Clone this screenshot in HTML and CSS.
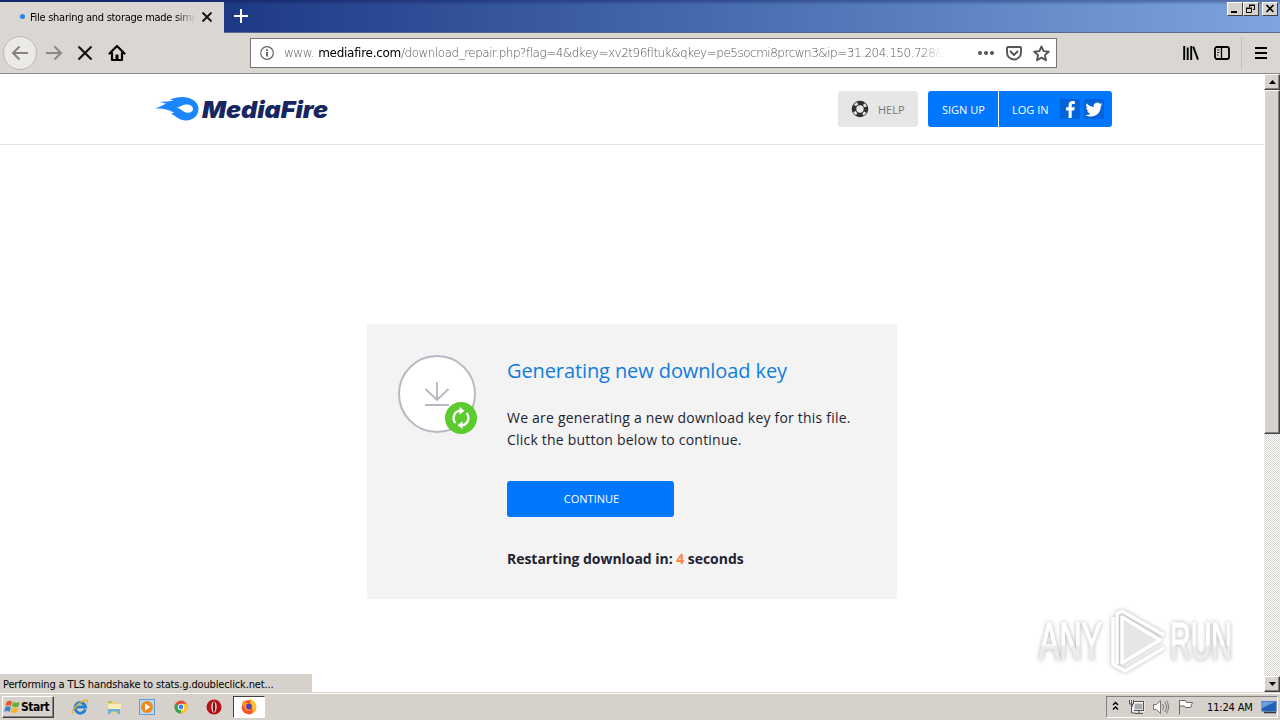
FILE: index.html
```html
<!DOCTYPE html>
<html lang="en">
<head>
    <meta charset="utf-8">
    <title>File sharing and storage made simple</title>
    <link rel="stylesheet" href="styles.css">
</head>
<body>
    <div class="titlebar">
        <div class="tab">
            <span class="dot"></span>
            <span class="tab-title">File sharing and storage made simple</span>
            <svg class="tab-close" width="12" height="12" viewBox="0 0 12 12"><path d="M1.500 1.500l9 9M10.500 1.500l-9 9" stroke="#111" stroke-width="1.800"/></svg>
        </div>
        <svg class="newtab" width="14" height="14" viewBox="0 0 14 14"><path d="M7 0v14M0 7h14" stroke="#fff" stroke-width="2"/></svg>
        <div class="winbtns">
            <span class="winbtn"><svg width="14" height="12"><path d="M3 9h6" stroke="#000" stroke-width="2"/></svg></span>
            <span class="winbtn"><svg width="14" height="12" fill="none" stroke="#000"><path d="M5.500 4V2.500h5v4H9M5 2h6M2.500 5.500h5v4h-5zM2 5h6"/></svg></span>
            <span class="winbtn close"><svg width="14" height="12"><path d="M3.500 2l7 7M10.500 2l-7 7" stroke="#000" stroke-width="1.600"/></svg></span>
        </div>
    </div>

    <div class="toolbar">
        <div class="nav">
            <span class="back"><svg width="18" height="16" viewBox="0 0 18 16" fill="none" stroke="#85837f" stroke-width="2"><path d="M17 8H2M8.500 1.500L2 8l6.500 6.500"/></svg></span>
            <svg class="forward" width="18" height="16" viewBox="0 0 18 16" fill="none" stroke="#8b8985" stroke-width="2"><path d="M1 8h15M9.500 1.500L16 8l-6.500 6.500"/></svg>
            <svg class="stop" width="16" height="16" viewBox="0 0 16 16"><path d="M1.500 1.500l13 13M14.500 1.500l-13 13" stroke="#111" stroke-width="2.200"/></svg>
            <svg class="home" width="18" height="18" viewBox="0 0 18 18"><path d="M1.500 9.500L9 2l7.500 7.500M4 9v7h10V9" fill="none" stroke="#000" stroke-width="2.200" stroke-linecap="round" stroke-linejoin="round"/><path d="M7.500 16v-5.500h3V16z"/></svg>
        </div>
        <div class="urlbar">
            <svg width="14" height="14" viewBox="0 0 14 14"><circle cx="7" cy="7" r="6.300" fill="none" stroke="#666" stroke-width="1.200"/><path d="M7 6v4.500M7 3.200v1.700" stroke="#555" stroke-width="1.800"/></svg>
            <span class="url">www.<b>mediafire.com</b>/download_repair.php?flag=4&amp;dkey=xv2t96fltuk&amp;qkey=pe5socmi8prcwn3&amp;ip=31.204.150.728&amp;</span>
            <svg class="dots" width="16" height="4" viewBox="0 0 16 4" fill="#555"><circle cx="2" cy="2" r="2"/><circle cx="8" cy="2" r="2"/><circle cx="14" cy="2" r="2"/></svg>
            <svg class="pocket" width="16" height="15" viewBox="0 0 16 15" fill="none" stroke="#555" stroke-width="1.900" stroke-linejoin="round" stroke-linecap="round"><path d="M2 1h12a1 1 0 0 1 1 1v4.500a7 7 0 0 1-14 0V2a1 1 0 0 1 1-1zM4.500 5.500L8 9l3.500-3.500"/></svg>
            <svg class="star" width="17" height="17" viewBox="0 0 17 17" fill="none" stroke="#555" stroke-width="1.900" stroke-linejoin="round"><path d="M8.500 1.400l2.100 4.700 5.200.6-3.900 3.400 1.100 5.200-4.500-2.700L4 15.300l1.100-5.200L1.200 6.700l5.200-.6z"/></svg>
        </div>
        <div class="tools">
            <svg class="library" width="16" height="14" viewBox="0 0 16 14" stroke="#000" stroke-width="1.900"><path d="M1.200 0v14M4.700 1.500V14M8.200 0v14M10.200 .7L15 13.600"/></svg>
            <svg class="sidebar" width="16" height="14" viewBox="0 0 16 14" fill="none" stroke="#000"><rect x="1" y="1" width="14" height="12" rx="2" stroke-width="1.800"/><path d="M7.500 1v12" stroke-width="1.300"/><path d="M3 4h2.500M3 6.500h2.500M3 9h1.500" stroke-width=".8"/></svg>
            <span class="sep"></span>
            <svg class="menu" width="12" height="12" viewBox="0 0 12 12"><path d="M0 1h12M0 6h12M0 11h12" stroke="#000" stroke-width="2"/></svg>
        </div>
    </div>

    <div class="view">
        <div class="page">
            <div class="header">
                <svg class="logo" width="176" height="30" viewBox="0 0 176 30">
                    <path d="M0 13.500C5 12 8 10 11 8.500L4.500 7C10 6.500 15 6.500 19 5.500 17 5 16 4.500 14.500 4.500 21 2 27 1.300 32 2.500 39 4 43.500 8.500 43.500 14c0 6.500-5.500 11.500-12.500 11.500-7 0-9.500-4.500-15-6.500 1-.7 2-1.200 3-1.300C13 14 7 13.500 0 13.500z" fill="#1b86ff"/>
                    <path d="M20.500 12.500c4 .5 5.500-2.500 10-3 4-.5 7.500 1.500 7.500 4.500s-3.500 4.500-7 3.500c-4-1-5.500-4.500-10.500-5z" fill="#fff"/>
                    <text class="logo-text" x="47" y="23" textLength="126" lengthAdjust="spacingAndGlyphs">MediaFire</text>
                </svg>
                <div class="actions">
                    <a class="help">
                        <svg width="18" height="18" viewBox="0 0 18 18" fill="none"><circle cx="9" cy="9" r="6" stroke="#2f2f2f" stroke-width="4.600"/><circle cx="9" cy="9" r="6.100" stroke="#e8e8e8" stroke-width="2.600" stroke-dasharray="3.200 6.380" stroke-dashoffset="-3.200"/></svg>
                        <span>HELP</span>
                    </a>
                    <a class="signup">SIGN UP</a>
                    <a class="login">
                        <span>LOG IN</span>
                        <svg class="fb" width="20" height="20" viewBox="0 0 20 20"><rect width="20" height="20" rx="2" fill="#0563d8"/><path d="M8.600 19v-7.500H6V8.300h2.600V6c0-2.700 1.500-4 3.900-4h2.300v3h-1.800c-1 0-1.300.5-1.300 1.400v1.900h3l-.4 3.200h-2.600V19z" fill="#fff"/></svg>
                        <svg width="20" height="20" viewBox="0 0 20 20"><rect width="20" height="20" rx="2" fill="#0563d8"/><path d="M18.500 5.200c-.7.300-1.300.5-2 .6.700-.5 1.200-1.100 1.500-1.900-.7.400-1.400.7-2.200.8a3.500 3.500 0 0 0-6 3.200C6.900 7.700 4.300 6.300 2.600 4.200c-1 1.600-.5 3.600 1.100 4.700-.6 0-1.100-.2-1.600-.4 0 1.700 1.200 3.100 2.800 3.500-.5.100-1 .1-1.600 0 .4 1.400 1.700 2.400 3.300 2.400A7 7 0 0 1 1.400 16c6.700 4 15.500.2 15.400-8.900.7-.5 1.200-1.100 1.700-1.900z" fill="#fff"/></svg>
                    </a>
                </div>
            </div>

            <div class="card">
                <svg class="badge" width="80" height="80" viewBox="0 0 80 80" fill="none">
                    <circle cx="39" cy="39" r="38" fill="#fff" stroke="#b6b8c3" stroke-width="2"/>
                    <path d="M39 27v18M27.500 34L39 45l11.500-11M27 50h24" stroke="#b6b8c3" stroke-width="1.900"/>
                    <circle cx="63" cy="63" r="16" fill="#5bcb2d"/>
                    <path d="M57.500 68a7.400 7.400 0 0 1 4.500-12.300M68.500 58a7.400 7.400 0 0 1-4.500 12.300" stroke="#fff" stroke-width="2.300"/>
                    <path d="M61.500 52l5 3.800-5 4zM64.500 74l-5-3.800 5-4z" fill="#fff"/>
                </svg>
                <div class="info">
                    <h1>Generating new download key</h1>
                    <p>We are generating a new download key for this file.<br>Click the button below to continue.</p>
                    <button class="continue">CONTINUE</button>
                    <div class="restart">Restarting download in: <span>4</span> seconds</div>
                </div>
            </div>

            <div class="status">Performing a TLS handshake to stats.g.doubleclick.net...</div>

            <svg class="watermark" width="210" height="76" viewBox="0 0 210 76">
                <defs>
                    <linearGradient id="shade" x1="0" y1="0" x2="0" y2="1">
                        <stop offset=".55" stop-color="#fff"/>
                        <stop offset=".6" stop-color="#ececec"/>
                    </linearGradient>
                </defs>
                <text x="10" y="59" textLength="63" lengthAdjust="spacingAndGlyphs">ANY</text>
                <text x="141" y="59" textLength="62" lengthAdjust="spacingAndGlyphs">RUN</text>
                <path d="M93 17v46l38-23z" fill="#e6e6e6"/>
                <g fill="none" stroke="#fff" stroke-width="3.500" stroke-linejoin="round">
                    <path d="M93 17v46l38-23-38-23zM93 11l42 24M93 11l-5 3v50M84 17v47l12 7 39-23" />
                </g>
            </svg>
        </div>
        <div class="scrollbar">
            <span class="sb-btn"><svg width="7" height="4"><path d="M0 4h7L3.500 0z"/></svg></span>
            <span class="thumb"></span>
            <span class="track"></span>
            <span class="sb-btn"><svg width="7" height="4"><path d="M0 0h7L3.500 4z"/></svg></span>
        </div>
    </div>

    <div class="taskbar">
        <div class="start">
            <svg width="17" height="16" viewBox="0 0 17 16"><path d="M2.500 3Q5 1 8 2.500L7 7Q4 5.500 1.500 7.300z" fill="#e8562a"/><path d="M9 3q3 1.500 6.500 0l-1 4.500Q11 9 8 7.500z" fill="#6dac3a"/><path d="M1.300 8.300Q4 6.500 6.800 8l-1 4.700Q3 11.300.3 13z" fill="#3a83cf"/><path d="M7.800 8.500q3 1.500 6.500 0L13.200 13q-3.500 1.700-6.500.2z" fill="#f3b72b"/></svg>
            <span>Start</span>
        </div>
        <div class="apps">
            <!-- internet explorer -->
            <svg width="18" height="18" viewBox="0 0 18 18" fill="none"><path d="M14.300 11.500A5.300 5.300 0 1 1 14.500 9H5" stroke="#2581cf" stroke-width="3"/><path d="M2 15.500C-1 13 9 3 15 2c2-.3 2 1 1 3" stroke="#e4b42e" stroke-width="1.400"/></svg>
            <!-- explorer -->
            <svg width="18" height="18" viewBox="0 0 18 18"><path d="M2 3h6l1 2h6v10H2z" fill="#f0cf69"/><path d="M3 6h13v5H3z" fill="#fbeeb5"/><path d="M3 16v-5h12v5h-2.500v-2.500h-7V16z" fill="#67b0dc"/><path d="M3.500 4h3" stroke="#4ca64c"/></svg>
            <!-- media player -->
            <svg width="18" height="18" viewBox="0 0 18 18"><rect x="1.500" y="1.500" width="15" height="15" fill="#b9d8f2" stroke="#5d9fd8"/><circle cx="9" cy="9" r="6" fill="#f08a1c"/><path d="M7 5.500v7l5.500-3.500z" fill="#fff"/></svg>
            <!-- chrome -->
            <svg width="18" height="18" viewBox="0 0 18 18"><circle cx="9" cy="9" r="6.500" fill="#e9493a"/><path d="M9 9L3.400 5.700A6.500 6.500 0 0 0 9 15.500z" fill="#35a552"/><path d="M9 9l0 6.500A6.500 6.500 0 0 0 14.600 5.800H9z" fill="#fbc921"/><circle cx="9" cy="9" r="3.200" fill="#fff"/><circle cx="9" cy="9" r="2.400" fill="#4382ee"/></svg>
            <!-- opera -->
            <svg width="18" height="18" viewBox="0 0 18 18"><circle cx="9" cy="9" r="7.500" fill="#b21217"/><ellipse cx="9" cy="9" rx="2.700" ry="5.500" fill="#e6dedd"/><ellipse cx="9" cy="9" rx="1.200" ry="5" fill="#7c0d10"/></svg>
            <span class="active"><svg width="18" height="18" viewBox="0 0 18 18"><circle cx="9" cy="9.200" r="7.300" fill="#f4502c"/><path d="M10 1c4 1 6.500 4.500 6.200 8.500-.3 3-2.200 5-4.700 6.200 2-3 1.500-6-1-7z" fill="#ffc62d"/><path d="M2 5l2-3 1 2.500 4 .5c2 .5 3.500 2 3.300 4.500A4 4 0 0 1 5 11z" fill="#ff9926"/><circle cx="9" cy="8.500" r="2.900" fill="#5a3bb0"/></svg></span>
        </div>
        <div class="tray">
            <svg class="chev" width="7" height="10" viewBox="0 0 7 10" fill="none" stroke="#000" stroke-width="1.400"><path d="M1 4l2.500-2.500L6 4M1 8.500L3.500 6 6 8.500"/></svg>
            <svg width="17" height="16" viewBox="0 0 17 16" fill="none" stroke="#555"><rect x="5.500" y="3.500" width="10" height="8" fill="#aaa" stroke="#fff" stroke-width="2"/><rect x="4.500" y="2.500" width="11" height="9"/><path d="M7 14.500h8M11 12v2"/><path d="M1.500 1v4h4V1M3.500 1v4M3.500 5v9H7" fill="#eee"/></svg>
            <svg width="18" height="16" viewBox="0 0 18 16" fill="none" stroke="#777"><path d="M1.500 5.500h3l4-4v13l-4-4h-3z" fill="#fff"/><path d="M10.500 5q2 3 0 6M12.500 3q4 5 0 10M14.500 1.500q4 6.500 0 13"/></svg>
            <svg width="17" height="16" viewBox="0 0 17 16" stroke="#666"><path d="M2.500 15.500V1.500h6l1 2h6l-2 5h-5l-1-1.500h-5" fill="#fff"/></svg>
            <span class="clock">11:24 AM</span>
            <svg width="16" height="16" viewBox="0 0 16 16"><rect x=".5" y="2" width="15" height="10.500" fill="#2360b8"/><path d="M1 2.500h14L1 9z" fill="#6a9fe0"/><path d="M3 13.500h12" stroke="#334" stroke-width="1.500"/></svg>
        </div>
    </div>
</body>
</html>
```
FILE: styles.css
```css
* {
    box-sizing: border-box;
}

body {
    margin: 0;
    width: 1280px;
    height: 720px;
    display: flex;
    flex-direction: column;
    overflow: hidden;
    font-family: "DejaVu Sans Condensed", "DejaVu Sans", sans-serif;
    font-size: 11px;
    color: #000;
    background: #fff;
}

svg {
    display: block;
    flex-shrink: 0;
}

/* window */

.titlebar {
    display: flex;
    height: 33px;
    background: linear-gradient(rgba(0, 10, 70, .35), transparent 5px), linear-gradient(90deg, #17317a, #1f3a85 18%, #4b70b4 60%, #7ea5de);
    border-bottom: 1px solid #58688c;
}

.tab {
    display: flex;
    align-items: center;
    width: 224px;
    height: 31px;
    margin-top: 2px;
    padding: 0 11px 2px 20px;
    background: #dad7d2;
}

.dot {
    width: 5px;
    height: 5px;
    border-radius: 50%;
    background: #2487e8;
}

.tab-title {
    width: 164px;
    margin: 0 7px 0 5px;
    padding-top: 1px;
    overflow: hidden;
    white-space: nowrap;
    letter-spacing: -0.28px;
    -webkit-mask-image: linear-gradient(90deg, #000 145px, transparent 166px);
}

.newtab {
    margin: 9px 0 0 10px;
}

.winbtns {
    display: flex;
    margin: 2px 2px 0 auto;
}

.winbtn {
    width: 16px;
    height: 14px;
    background: #d6d3ce;
    border: 1px solid;
    border-color: #fff #404040 #404040 #fff;
}

.winbtn.close {
    margin-left: 3px;
}

.toolbar {
    display: flex;
    align-items: center;
    height: 41px;
    background: #dad7d2;
    border-bottom: 1px solid #888;
}

.nav {
    display: flex;
    align-items: center;
    width: 250px;
    padding-left: 3px;
}

.back {
    display: flex;
    align-items: center;
    justify-content: center;
    width: 34px;
    height: 34px;
    border: 1px solid #bcb9b4;
    border-radius: 50%;
    background: #eceae7;
}

.forward {
    margin-left: 8px;
}

.stop {
    margin-left: 14px;
}

.home {
    margin-left: 15px;
}

.urlbar {
    display: flex;
    align-items: center;
    width: 807px;
    height: 30px;
    padding-left: 9px;
    background: #fff;
    border: 1px solid #777;
}

.url {
    width: 660px;
    margin-left: 10px;
    overflow: hidden;
    white-space: nowrap;
    font-family: "DejaVu Sans", sans-serif;
    font-weight: 200;
    font-size: 12px;
    letter-spacing: -0.49px;
    color: #555;
    -webkit-mask-image: linear-gradient(90deg, #000 635px, transparent 660px);
}

.url b {
    margin-left: 4px;
    font-weight: 400;
    letter-spacing: -0.28px;
    color: #000;
}

.dots {
    margin-left: 34px;
}

.pocket {
    margin-left: 12px;
}

.star {
    margin-left: 11px;
}

.tools {
    display: flex;
    align-items: center;
    margin-left: 126px;
}

.sidebar {
    margin-left: 15px;
}

.sep {
    width: 1px;
    height: 32px;
    margin: 0 13px 0 11px;
    background: #c3c0bb;
}

/* page */

.view {
    display: flex;
    height: 618px;
}

.page {
    position: relative;
    width: 1264px;
    background: #fff;
}

.header {
    display: flex;
    align-items: center;
    justify-content: space-between;
    height: 71px;
    padding: 0 152px 0 155px;
    border-bottom: 1px solid #e2e2e4;
}

.logo {
    margin-top: 1px;
}

.logo-text {
    font: italic 900 23.500px Inter, sans-serif;
    fill: #16265f;
}

.actions {
    display: flex;
    font-family: "Open Sans", sans-serif;
    font-size: 11px;
    color: #fff;
}

.actions a {
    display: flex;
    align-items: center;
    height: 36px;
    background: #0077ff;
}

.actions .help {
    width: 80px;
    margin-right: 10px;
    padding-left: 13px;
    gap: 9px;
    border-radius: 3px;
    color: #777;
    background: #e6e6e6;
}

.signup {
    width: 70px;
    padding-left: 14px;
    border-radius: 3px 0 0 3px;
}

.login {
    width: 113px;
    margin-left: 1px;
    padding-left: 13px;
    gap: 4px;
    border-radius: 0 3px 3px 0;
}

.login span {
    width: 44px;
}

.card {
    display: flex;
    width: 530px;
    height: 275px;
    margin: 179px auto 0;
    padding: 31px;
    background: #f3f3f3;
}

.info {
    margin-left: 29px;
    font-family: "Open Sans", sans-serif;
    font-size: 14px;
    color: #232331;
}

.info h1 {
    margin: 0;
    font-size: 20px;
    line-height: 32px;
    font-weight: 400;
    letter-spacing: -0.1px;
    color: #0f7de0;
}

.info p {
    margin: 20px 0 30px;
    line-height: 22px;
    white-space: nowrap;
    letter-spacing: 0.21px;
}

.continue {
    display: block;
    width: 167px;
    height: 36px;
    padding: 0 0 2px 2px;
    border: 0;
    border-radius: 3px;
    font: 11px "Open Sans", sans-serif;
    color: #fff;
    background: #0077ff;
}

.restart {
    margin-top: 32px;
    line-height: 20px;
    font-weight: 700;
    letter-spacing: -0.04px;
}

.restart span {
    color: #ff8142;
}

.status {
    position: absolute;
    left: 0;
    bottom: 0;
    width: 312px;
    height: 18px;
    padding-left: 3px;
    line-height: 21px;
    letter-spacing: -0.15px;
    background: #d6d1ca;
}

.watermark {
    position: absolute;
    right: 25px;
    bottom: 16px;
    filter: drop-shadow(0 0 2px rgba(0, 0, 0, .3));
}

.watermark text {
    font: 51px "Liberation Sans", sans-serif;
    fill: url(#shade);
    stroke: url(#shade);
    stroke-width: 1.500px;
}

/* scrollbar */

.scrollbar {
    display: flex;
    flex-direction: column;
    width: 16px;
    background: #fff;
}

.sb-btn {
    display: flex;
    align-items: center;
    justify-content: center;
    height: 16px;
}

.sb-btn,
.thumb {
    background: #d6d3ce;
    border: 1px solid;
    border-color: #fff #404040 #404040 #fff;
    box-shadow: inset -1px -1px #848284;
}

.thumb {
    height: 344px;
}

.track {
    flex: 1;
    background: repeating-conic-gradient(#fff 0 25%, #d6d3ce 0 50%) 0 0 / 2px 2px;
}

/* taskbar */

.taskbar {
    display: flex;
    align-items: center;
    height: 28px;
    padding: 1px 2px 0;
    background: #d6d1ca;
    border-top: 1px solid #d6d1ca;
    box-shadow: inset 0 1px #fff;
}

.start {
    display: flex;
    align-items: center;
    width: 52px;
    height: 22px;
    padding-left: 1px;
    font-size: 12px;
    font-weight: 700;
    border: 1px solid;
    border-color: #fff #404040 #404040 #fff;
    box-shadow: inset -1px -1px #848284;
}

.start span {
    letter-spacing: -0.5px;
}

.apps {
    display: flex;
    align-items: center;
    gap: 15.500px;
    margin-left: 17px;
}

.active {
    display: flex;
    align-items: center;
    justify-content: center;
    width: 32px;
    height: 22px;
    margin-left: -6px;
    background: #fff;
    border: 1px solid;
    border-color: #404040 #fff #fff #404040;
}

.tray {
    display: flex;
    align-items: center;
    width: 172px;
    height: 22px;
    margin-left: auto;
    padding-left: 5px;
    gap: 7px;
    border: 1px solid;
    border-color: #848284 #fff #fff #848284;
}

.chev {
    margin-right: 2px;
    margin-top: -3px;
}

.clock {
    width: 47px;
    margin-left: 6px;
    white-space: nowrap;
    letter-spacing: -0.15px;
}
```
